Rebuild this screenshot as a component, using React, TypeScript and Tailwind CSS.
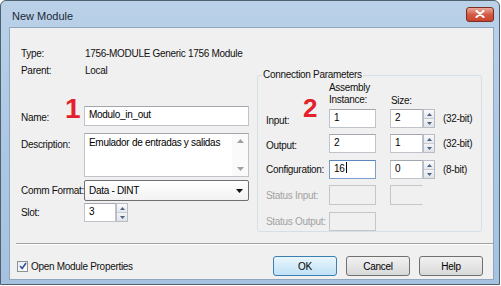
import React from "react";

const Spin = ({ h = "h-[19px]" }: { h?: string }) => (
  <div className={`flex w-[12px] flex-col ${h} border border-[#b9bcc4] bg-[#f3f4f6]`}>
    <div className="flex flex-1 items-center justify-center border-b border-[#c8cbd2] bg-gradient-to-b from-[#fbfbfc] to-[#e4e7ec]">
      <svg width="5" height="3" viewBox="0 0 5 3"><path d="M0 3 L2.5 0 L5 3Z" fill="#4d6185" /></svg>
    </div>
    <div className="flex flex-1 items-center justify-center bg-gradient-to-b from-[#f3f4f6] to-[#dfe3e9]">
      <svg width="5" height="3" viewBox="0 0 5 3"><path d="M0 0 L2.5 3 L5 0Z" fill="#4d6185" /></svg>
    </div>
  </div>
);

const Field = ({ w, v, focus, disabled, noRight }: { w: string; v?: string; focus?: boolean; disabled?: boolean; noRight?: boolean }) => (
  <div
    className={`${w} h-full border ${focus ? "border-[#7a9fcb] border-t-[#5d86bb]" : disabled ? "border-[#c4c6cb]" : "border-[#c0c3ca] border-t-[#a2a6ae]"} ${noRight ? "border-r-transparent" : ""} ${disabled ? "bg-[#f0f0f0]" : "bg-white"} whitespace-nowrap pl-[4px] leading-[16px] text-black`}
  >
    {v}
    {focus && <span className="ml-[1px] inline-block h-[11px] w-[1px] translate-y-[1px] bg-black" />}
  </div>
);

const Btn = ({ label, def }: { label: string; def?: boolean }) => (
  <div
    className={`flex h-[20px] w-[64px] items-center justify-center rounded-[3px] border ${def ? "border-[#3c7fb1] bg-gradient-to-b from-[#eaf6fd] to-[#bfe1f5]" : "border-[#707070] bg-gradient-to-b from-[#f2f2f2] to-[#d8d8d8]"} text-black`}
  >
    {label}
  </div>
);

export default function App() {
  return (
    <div className="relative h-[286px] w-[501px] overflow-hidden bg-white font-['Liberation_Sans',sans-serif] text-[10px] tracking-[-0.3px] text-[#111]">
      <div className="flex h-[285px] w-[500px] flex-col rounded-t-[6px] border border-[#50606f] bg-gradient-to-b from-[#bad1e8] via-[#adc8e4] to-[#a6c2e0]">
        <div className="flex h-[26px] shrink-0 items-center justify-between pl-[11px] pr-[5px]">
          <span className="pt-[4px] text-[11px] tracking-normal text-[#1b2836]">New Module</span>
          <div className="flex h-[15px] w-[28px] items-center justify-center rounded-[3px] border border-[#7a2f24] bg-gradient-to-b from-[#e9a99a] via-[#d45a45] to-[#c8432d]">
            <svg width="10" height="8" viewBox="0 0 10 8">
              <path d="M1.5 1 L8.5 7 M8.5 1 L1.5 7" stroke="#ffffff" strokeWidth="2.2" strokeLinecap="round" />
            </svg>
          </div>
        </div>
        <div className="mb-[4px] ml-[8px] mr-[5px] flex flex-1 flex-col whitespace-nowrap border border-[#8ea6c0] bg-[#f0f0f0]">
          <div className="flex">
            <div className="flex w-[240px] flex-col pl-[11px]">
              <div className="mt-[17px] flex h-[16px] items-center">
                <span className="w-[64px]">Type:</span>
                <span>1756-MODULE Generic 1756 Module</span>
              </div>
              <div className="mt-[1px] flex h-[16px] items-center">
                <span className="w-[64px]">Parent:</span>
                <span>Local</span>
              </div>
              <div className="relative mt-[28px] flex h-[20px] items-center">
                <span className="absolute left-[44px] top-[-11px] text-[28px] font-bold leading-none tracking-normal text-[#e4202a]">1</span>
                <span className="w-[63px] pt-[3px]">Name:</span>
                <Field w="w-[165px]" v="Modulo_in_out" />
              </div>
              <div className="mt-[7px] flex h-[44px]">
                <span className="w-[63px] pt-[4px]">Description:</span>
                <div className="flex w-[165px] border border-[#c0c3ca] border-t-[#a2a6ae] bg-white">
                  <div className="flex-1 pl-[4px] pt-[1px] leading-[16px] text-black">Emulador de entradas y salidas</div>
                  <div className="flex w-[16px] flex-col items-center justify-between bg-[#fafafa] py-[5px]">
                    <svg width="7" height="4" viewBox="0 0 7 4"><path d="M0 4 L3.5 0 L7 4Z" fill="#a0a0a0" /></svg>
                    <svg width="7" height="4" viewBox="0 0 7 4"><path d="M0 0 L3.5 4 L7 0Z" fill="#a0a0a0" /></svg>
                  </div>
                </div>
              </div>
              <div className="mt-[3px] flex h-[21px] items-center">
                <span className="w-[63px]">Comm Format:</span>
                <div className="flex h-full w-[165px] items-center justify-between rounded-[2px] border border-[#6f6f6f] bg-gradient-to-b from-[#ffffff] to-[#f2f2f2] pl-[4px] pr-[5px] text-black">
                  <span>Data - DINT</span>
                  <svg width="7" height="4" viewBox="0 0 7 4"><path d="M0 0 L3.5 4 L7 0Z" fill="#111" /></svg>
                </div>
              </div>
              <div className="mt-[2px] flex h-[19px] items-center">
                <span className="w-[63px]">Slot:</span>
                <div className="flex h-full">
                  <Field w="w-[32px]" v="3" />
                  <Spin />
                </div>
              </div>
            </div>
            <div className="relative ml-[7px] mt-[47px] flex h-[157px] w-[225px] flex-col rounded-[3px] border border-[#d5dfe5] pl-[8px]">
              <span className="absolute left-[4px] top-[-8px] bg-[#f0f0f0] px-[1px] leading-[14px]">Connection Parameters</span>
              <div className="relative mt-[6px] flex h-[27px]">
                <span className="absolute left-[37px] top-[13px] text-[26px] font-bold leading-none tracking-normal text-[#e4202a]">2</span>
                <span className="w-[63px]" />
                <span className="w-[62px] leading-[12px]">
                  Assembly
                  <br />
                  Instance:
                </span>
                <span className="self-end pb-[1px]">Size:</span>
              </div>
              <div className="flex h-[19px] items-center">
                <span className="w-[63px] pt-[3px]">Input:</span>
                <Field w="w-[47px]" v="1" />
                <div className="ml-[14px] flex h-full">
                  <Field w="w-[33px]" v="2" />
                  <Spin />
                </div>
                <span className="ml-[8px]">(32-bit)</span>
              </div>
              <div className="mt-[6px] flex h-[19px] items-center">
                <span className="w-[63px] pt-[3px]">Output:</span>
                <Field w="w-[47px]" v="2" />
                <div className="ml-[14px] flex h-full">
                  <Field w="w-[33px]" v="1" />
                  <Spin />
                </div>
                <span className="ml-[8px]">(32-bit)</span>
              </div>
              <div className="mt-[7px] flex h-[19px] items-center">
                <span className="w-[63px]">Configuration:</span>
                <Field w="w-[47px]" v="16" focus />
                <div className="ml-[14px] flex h-full">
                  <Field w="w-[33px]" v="0" />
                  <Spin />
                </div>
                <span className="ml-[8px]">(8-bit)</span>
              </div>
              <div className="mt-[6px] flex h-[20px] items-center text-[#a3a3a3]">
                <span className="w-[63px]">Status Input:</span>
                <Field w="w-[47px]" disabled />
                <div className="ml-[14px] flex h-full">
                  <Field w="w-[33px]" disabled noRight />
                </div>
              </div>
              <div className="mt-[7px] flex h-[19px] items-center text-[#a3a3a3]">
                <span className="w-[63px]">Status Output:</span>
                <Field w="w-[47px]" disabled />
              </div>
            </div>
          </div>
          <div className="ml-[6px] mt-[11px] border-t border-[#a0a0a0] border-b border-b-white" />
          <div className="mt-[11px] flex h-[20px] items-center">
            <div className="ml-[7px] flex h-[11px] w-[11px] items-center justify-center border border-[#8e8f8f] bg-gradient-to-br from-[#e6eef7] to-white">
              <svg width="8" height="8" viewBox="0 0 8 8"><path d="M1 4 L3.2 6.5 L7 1" stroke="#3b4f9c" strokeWidth="1.6" fill="none" /></svg>
            </div>
            <span className="ml-[3px]">Open Module Properties</span>
            <div className="ml-auto mr-[10px] flex gap-[9px]">
              <Btn label="OK" def />
              <Btn label="Cancel" />
              <Btn label="Help" />
            </div>
          </div>
        </div>
      </div>
    </div>
  );
}
